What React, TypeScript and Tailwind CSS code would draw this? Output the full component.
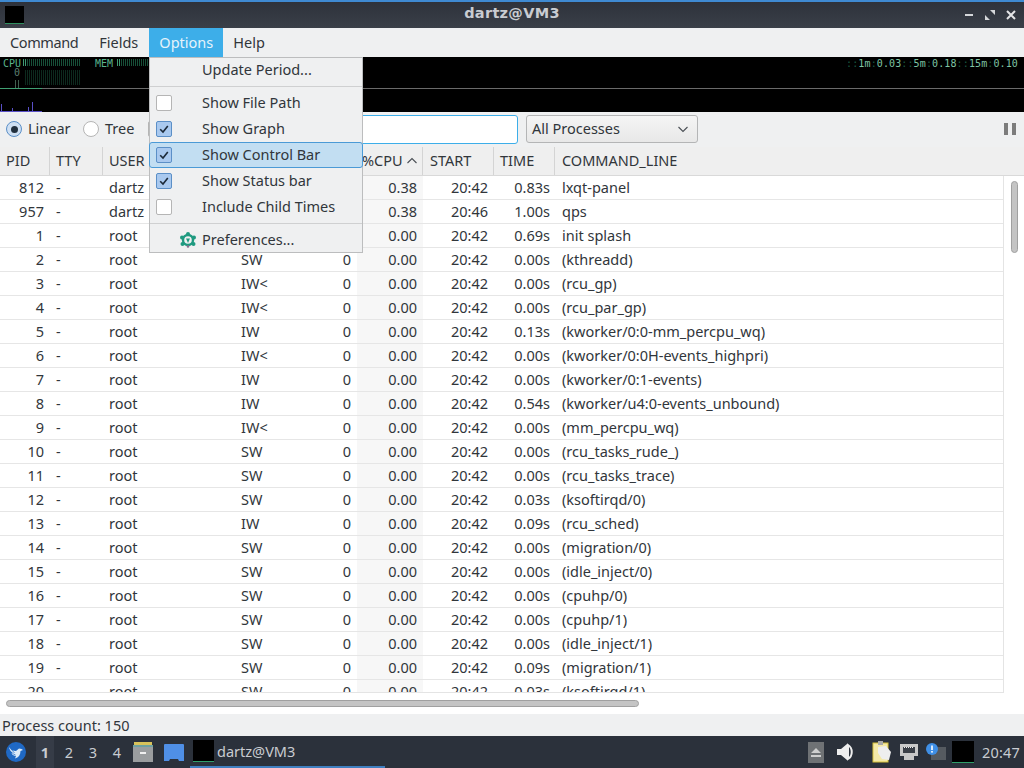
import React from 'react';

const rows = [
  { pid: '812', user: 'dartz', stat: '', rss: '', cpu: '0.38', start: '20:42', time: '0.83s', cmd: 'lxqt-panel' },
  { pid: '957', user: 'dartz', stat: '', rss: '', cpu: '0.38', start: '20:46', time: '1.00s', cmd: 'qps' },
  { pid: '1', user: 'root', stat: '', rss: '', cpu: '0.00', start: '20:42', time: '0.69s', cmd: 'init splash' },
  { pid: '2', user: 'root', stat: 'SW', rss: '0', cpu: '0.00', start: '20:42', time: '0.00s', cmd: '(kthreadd)' },
  { pid: '3', user: 'root', stat: 'IW<', rss: '0', cpu: '0.00', start: '20:42', time: '0.00s', cmd: '(rcu_gp)' },
  { pid: '4', user: 'root', stat: 'IW<', rss: '0', cpu: '0.00', start: '20:42', time: '0.00s', cmd: '(rcu_par_gp)' },
  { pid: '5', user: 'root', stat: 'IW', rss: '0', cpu: '0.00', start: '20:42', time: '0.13s', cmd: '(kworker/0:0-mm_percpu_wq)' },
  { pid: '6', user: 'root', stat: 'IW<', rss: '0', cpu: '0.00', start: '20:42', time: '0.00s', cmd: '(kworker/0:0H-events_highpri)' },
  { pid: '7', user: 'root', stat: 'IW', rss: '0', cpu: '0.00', start: '20:42', time: '0.00s', cmd: '(kworker/0:1-events)' },
  { pid: '8', user: 'root', stat: 'IW', rss: '0', cpu: '0.00', start: '20:42', time: '0.54s', cmd: '(kworker/u4:0-events_unbound)' },
  { pid: '9', user: 'root', stat: 'IW<', rss: '0', cpu: '0.00', start: '20:42', time: '0.00s', cmd: '(mm_percpu_wq)' },
  { pid: '10', user: 'root', stat: 'SW', rss: '0', cpu: '0.00', start: '20:42', time: '0.00s', cmd: '(rcu_tasks_rude_)' },
  { pid: '11', user: 'root', stat: 'SW', rss: '0', cpu: '0.00', start: '20:42', time: '0.00s', cmd: '(rcu_tasks_trace)' },
  { pid: '12', user: 'root', stat: 'SW', rss: '0', cpu: '0.00', start: '20:42', time: '0.03s', cmd: '(ksoftirqd/0)' },
  { pid: '13', user: 'root', stat: 'IW', rss: '0', cpu: '0.00', start: '20:42', time: '0.09s', cmd: '(rcu_sched)' },
  { pid: '14', user: 'root', stat: 'SW', rss: '0', cpu: '0.00', start: '20:42', time: '0.00s', cmd: '(migration/0)' },
  { pid: '15', user: 'root', stat: 'SW', rss: '0', cpu: '0.00', start: '20:42', time: '0.00s', cmd: '(idle_inject/0)' },
  { pid: '16', user: 'root', stat: 'SW', rss: '0', cpu: '0.00', start: '20:42', time: '0.00s', cmd: '(cpuhp/0)' },
  { pid: '17', user: 'root', stat: 'SW', rss: '0', cpu: '0.00', start: '20:42', time: '0.00s', cmd: '(cpuhp/1)' },
  { pid: '18', user: 'root', stat: 'SW', rss: '0', cpu: '0.00', start: '20:42', time: '0.00s', cmd: '(idle_inject/1)' },
  { pid: '19', user: 'root', stat: 'SW', rss: '0', cpu: '0.00', start: '20:42', time: '0.09s', cmd: '(migration/1)' },
  { pid: '20', user: 'root', stat: 'SW', rss: '0', cpu: '0.00', start: '20:42', time: '0.03s', cmd: '(ksoftirqd/1)' },
];

function Check({ on }: { on: boolean }) {
  return (
    <span
      className={`flex h-4 w-4 items-center justify-center rounded-[2px] border ${
        on ? 'border-[#5b8fc7] bg-[#a9c9ef]' : 'border-[#b5b5b5] bg-white'
      }`}
    >
      {on && (
        <svg width="12" height="12" viewBox="0 0 12 12" fill="none">
          <path d="M2.2 6.2 5 9l4.8-6" stroke="#1c2a3a" strokeWidth="1.6" />
        </svg>
      )}
    </span>
  );
}

function MenuItem({ label, on, active }: { label: string; on: boolean; active?: boolean }) {
  return (
    <div
      className={`flex h-[26px] items-center pl-[6px] ${
        active ? 'mx-[-1px] rounded-[3px] border border-[#4b9ad6] bg-[#c2def2]' : ''
      }`}
    >
      <Check on={on} />
      <span className="ml-[30px]">{label}</span>
    </div>
  );
}

function Header({ label, className }: { label?: string; className: string }) {
  return (
    <div className={`flex h-full shrink-0 items-center border-r border-[#d4d4d4] ${className}`}>{label}</div>
  );
}

export default function App() {
  return (
    <div className="relative flex h-[768px] w-[1024px] flex-col overflow-hidden bg-white text-[14.5px] text-[#31363b] [font-family:'Noto_Sans',sans-serif]">
      {/* title bar */}
      <div className="relative flex h-[28px] shrink-0 items-center justify-center border-t-2 border-[#3f8ad2] bg-gradient-to-b from-[#2e323b] to-[#3a3f48]">
        <div className="absolute left-[5px] top-[4px] h-[18px] w-[19px] border-b border-[#2f8f5f] bg-black" />
        <span className="mt-[-3px] text-[14.5px] font-bold tracking-[0.3px] text-[#c9ccd1] [font-family:'DejaVu_Sans',sans-serif]">dartz@VM3</span>
        <div className="absolute right-[8px] top-[3px] flex items-center gap-[11px]">
          <svg width="10" height="20" viewBox="0 0 10 20">
            <rect x="1" y="9" width="8" height="2" fill="#d5d7da" />
          </svg>
          <svg width="10" height="20" viewBox="0 0 10 20">
            <path d="M5 5h5v5zM0 10l5 5H0z" fill="#d5d7da" />
          </svg>
          <svg width="10" height="20" viewBox="0 0 10 20">
            <path d="M1 6l8 8M9 6l-8 8" stroke="#e4e5e7" strokeWidth="2" />
          </svg>
        </div>
      </div>

      {/* menu bar */}
      <div className="flex h-[29px] shrink-0 items-center bg-[#eff0f1]">
        <span className="px-[10px] tracking-[-0.4px]">Command</span>
        <span className="ml-px pl-[10px] pr-[11px]">Fields</span>
        <span className="flex h-full items-center bg-[#3daee9] px-[10px] text-[#e6f3fb]">Options</span>
        <span className="px-[10px]">Help</span>
      </div>

      {/* graph */}
      <div className="relative h-[55px] shrink-0 bg-black text-[10px] leading-none text-[#5ab48c] [font-family:'DejaVu_Sans_Mono',monospace]">
        <div className="h-[32px] border-b border-[#6a6a6a]">
          <div className="flex h-[31px] items-start pl-[3px] pt-[2px]">
            <span className="w-[19px]">CPU</span>
            <svg width="60" height="26" className="shrink-0" shapeRendering="crispEdges">
              <path d="M1 0v7M3 0v7" stroke="#3f9a72" />
              <path d="M5 0v7M7 0v7M9 0v7M11 0v7M13 0v7M15 0v7M17 0v7M19 0v7M21 0v7M23 0v7M25 0v7M27 0v7M29 0v7M31 0v7M33 0v7M35 0v7M37 0v7M39 0v7M41 0v7M43 0v7M45 0v7M47 0v7M49 0v7M51 0v7M53 0v7M55 0v7M57 0v7" stroke="#174f38" />
              <path d="M3 11v15M5 11v15M7 11v15M9 11v15M11 11v15M13 11v15M15 11v15M17 11v15M19 11v15M21 11v15M23 11v15M25 11v15M27 11v15M29 11v15M31 11v15M33 11v15M35 11v15M37 11v15M39 11v15M41 11v15M43 11v15M45 11v15M47 11v15M49 11v15M51 11v15M53 11v15M55 11v15M57 11v15" stroke="#0d2a1e" />
            </svg>
            <span className="ml-[13px] w-[21px]">MEM</span>
            <svg width="34" height="8" className="shrink-0" shapeRendering="crispEdges">
              <path d="M1 0v7M3 0v7" stroke="#3f9a72" />
              <path d="M5 0v7M7 0v7M9 0v7M11 0v7M13 0v7M15 0v7M17 0v7M19 0v7M21 0v7M23 0v7M25 0v7M27 0v7M29 0v7M31 0v7" stroke="#174f38" />
            </svg>
            <span className="ml-auto mr-[6px] tracking-[0.12px] text-[#7fc4a4]">
              <span className="text-[#1a5a40]">::</span>1m<span className="text-[#1a5a40]">:</span>0.03<span className="text-[#1a5a40]">::</span>5m<span className="text-[#1a5a40]">:</span>0.18<span className="text-[#1a5a40]">::</span>15m<span className="text-[#1a5a40]">:</span>0.10
            </span>
          </div>
          <span className="absolute left-[14px] top-[11px] text-[#5d7f70]">0</span>
          <span className="absolute left-[15px] top-[23px] h-[8px] w-[4px] border-x border-[#40604f]" />
          <span className="absolute left-0 top-[31px] h-px w-[42px] bg-[#3f9f72]" />
        </div>
        <svg width="42" height="22" className="absolute left-0 top-[33px]" shapeRendering="crispEdges">
          <path d="M1 14v7M12 18v3M28 17v4M32 12v9" stroke="#5a50c8" />
          <path d="M0 21.5h42" stroke="#5a50c8" />
        </svg>
      </div>

      {/* control bar */}
      <div className="flex h-[35px] shrink-0 items-center bg-[#eff0f1] pb-px">
        <span className="ml-[6px] flex h-4 w-4 items-center justify-center rounded-full border border-[#5b8fc7] bg-[#cfe0f3]">
          <span className="h-[7px] w-[7px] rounded-full bg-[#22303e]" />
        </span>
        <span className="ml-[6px] w-[41px]">Linear</span>
        <span className="ml-[14px] h-4 w-4 rounded-full border border-[#b5b5b5] bg-white" />
        <span className="ml-[6px] w-[30px]">Tree</span>
        <span className="ml-[13px] h-4 w-4 shrink-0 rounded-[2px] border border-[#b5b5b5] bg-white" />
        <div className="ml-[4px] h-[29px] w-[350px] rounded-[3px] border border-[#3daee9] bg-white" />
        <div className="ml-[8px] flex h-[28px] w-[172px] items-center justify-between rounded-[3px] border border-[#b4b5b6] bg-gradient-to-b from-[#f5f5f5] to-[#e8e8e8] pl-[5px] pr-[8px]">
          <span>All Processes</span>
          <svg width="12" height="12" viewBox="0 0 12 12" fill="none">
            <path d="M1.5 4 6 8.5 10.5 4" stroke="#4a4f55" strokeWidth="1.1" />
          </svg>
        </div>
        <div className="ml-auto mr-[8px] flex gap-[4px]">
          <span className="h-[12px] w-[4px] bg-[#7c7c7c]" />
          <span className="h-[12px] w-[4px] bg-[#7c7c7c]" />
        </div>
      </div>

      {/* table header */}
      <div className="flex h-[29px] shrink-0 items-center border-b border-[#d9d9d9] bg-[#efefef]">
        <Header label="PID" className="w-[50px] pl-[6px]" />
        <Header label="TTY" className="w-[53px] pl-[6px]" />
        <Header label="USER" className="w-[130px] pl-[6px]" />
        <Header className="w-[57px]" />
        <Header className="w-[67px]" />
        <div className="flex h-full w-[66px] shrink-0 items-center border-r border-[#d4d4d4] pl-[5px]">
          %CPU
          <svg width="12" height="12" viewBox="0 0 12 12" fill="none" className="ml-[3px]">
            <path d="M1.5 8 6 3.5 10.5 8" stroke="#4a4f55" strokeWidth="1.1" />
          </svg>
        </div>
        <Header label="START" className="w-[71px] pl-[7px]" />
        <Header label="TIME" className="w-[61px] pl-[6px]" />
        <div className="flex h-full flex-1 items-center pl-[7px]">COMMAND_LINE</div>
      </div>

      {/* table */}
      <div className="relative flex min-h-0 flex-1 flex-col bg-white">
        <div className="flex min-h-0 flex-1">
          <div className="h-[517px] w-[1004px] shrink-0 overflow-hidden border-r border-b border-[#e4e4e4]">
            {rows.map((r) => (
              <div key={r.pid} className="flex h-[24px] items-center border-b border-[#e6e6e6]">
                <div className="w-[50px] shrink-0 pr-[6px] text-right">{r.pid}</div>
                <div className="w-[53px] shrink-0 pl-[6px]">-</div>
                <div className="w-[130px] shrink-0 pl-[6px]">{r.user}</div>
                <div className="w-[57px] shrink-0 pl-[8px]">{r.stat}</div>
                <div className="w-[67px] shrink-0 pr-[6px] text-right">{r.rss}</div>
                <div className="flex h-full w-[66px] shrink-0 items-center justify-end bg-[#f7f7f7] pr-[6px]">{r.cpu}</div>
                <div className="w-[71px] shrink-0 pr-[6px] text-right">{r.start}</div>
                <div className="w-[61px] shrink-0 pr-[5px] text-right">{r.time}</div>
                <div className="flex-1 whitespace-nowrap pl-[7px]">{r.cmd}</div>
              </div>
            ))}
          </div>
          <div className="flex-1 pl-[7px] pt-[5px]">
            <div className="h-[72px] w-[7px] rounded-full border border-[#a0a0a0] bg-[#c4c4c4]" />
          </div>
        </div>
        <div className="flex h-[21px] shrink-0 items-center pl-[6px]">
          <div className="h-[7px] w-[633px] rounded-full border border-[#a0a0a0] bg-[#c4c4c4]" />
        </div>
      </div>

      {/* status bar */}
      <div className="flex h-[22px] shrink-0 items-center bg-[#eff0f1] pl-[2px] pt-px">Process count: 150</div>

      {/* panel */}
      <div className="flex h-[32px] shrink-0 items-center bg-[#2b313b] text-[#c9ccd1]">
        <svg width="20" height="20" viewBox="0 0 20 20" className="ml-[6px] shrink-0">
          <circle cx="10" cy="10" r="10" fill="#1f69c5" />
          <path d="M3 5c2 3 4 4 7 4l3-2.500 2.500.5 1.500 1-2.500 1c0 4-2 6.500-5.500 7.500l1-2.500c-2 0-3.500-1-4.500-2.500l1.500-.5C4.500 9.500 3.500 7.500 3 5z" fill="#dcebf9" />
          <path d="M5 7l3.500 4M6.500 11.500l3 1.500" stroke="#1f69c5" strokeWidth=".7" />
        </svg>
        <span className="ml-[10px] flex h-[32px] w-[18px] items-center justify-center bg-[#363c47] pt-px font-bold">1</span>
        <span className="ml-[6px] w-[18px] pt-px text-center">2</span>
        <span className="ml-[6px] w-[18px] pt-px text-center">3</span>
        <span className="ml-[6px] w-[18px] pt-px text-center">4</span>
        <svg width="22" height="22" viewBox="0 0 22 22" className="ml-[6px] shrink-0">
          <rect x="2" y="1" width="18" height="4" fill="#d8c25a" />
          <rect x="1" y="4" width="20" height="3" fill="#6ea0a0" />
          <rect x="1" y="6" width="20" height="15" fill="#9a9d9f" />
          <rect x="8" y="11" width="6" height="2" fill="#f0f0f0" />
        </svg>
        <svg width="22" height="22" viewBox="0 0 22 22" className="ml-[9px] shrink-0">
          <path d="M2 3h18a1 1 0 0 1 1 1v16h-5l-1-2H7l-1 2H1V4a1 1 0 0 1 1-1z" fill="#4f8fe6" />
        </svg>
        <div className="ml-[5px] flex h-[32px] w-[195px] shrink-0 items-center border-b-2 border-[#3f7fc0] pl-[3px]">
          <span className="h-[22px] w-[21px] border-b border-[#2f9f6a] bg-black" />
          <span className="ml-[3px] pt-px">dartz@VM3</span>
        </div>
        <div className="ml-auto flex h-full items-center">
          <svg width="16" height="21" viewBox="0 0 16 21">
            <rect width="16" height="21" fill="#6f7275" />
            <path d="M8 6l5 5H3zM3 13h10v2H3z" fill="#cfcfcf" />
          </svg>
          <svg width="18" height="18" viewBox="0 0 18 18" className="ml-[12px]">
            <path d="M1 6h4l6-5v16l-6-5H1z" fill="#eeeeee" />
            <path d="M12 2c5 3 5 11 0 14z" fill="none" stroke="#eeeeee" strokeWidth="2" />
          </svg>
          <svg width="20" height="22" viewBox="0 0 20 22" className="ml-[18px]">
            <rect x="1" y="2" width="15" height="19" fill="#f4e9a8" stroke="#d8c23a" />
            <path d="M6 6l8-1 5 6-2 8-7-1-4-6z" fill="#eeeeee" />
            <rect x="6" y="0" width="5" height="4" fill="#aaaaaa" />
          </svg>
          <svg width="20" height="18" viewBox="0 0 20 18" className="ml-[7px]">
            <path d="M1 1h18v12h-4v4H5v-4H1z" fill="#c8c8c8" />
            <rect x="4" y="4" width="12" height="6" fill="#3a3f47" />
            <path d="M5 4.500h10" stroke="#eeeeee" strokeDasharray="1 1" />
          </svg>
          <svg width="20" height="18" viewBox="0 0 20 18" className="ml-[7px]">
            <rect x="5" y="4" width="15" height="13" fill="#555a60" />
            <circle cx="6" cy="6" r="6" fill="#3f8fe6" />
            <rect x="5.200" y="2.500" width="1.600" height="4.500" fill="#ffffff" />
            <rect x="5.200" y="8" width="1.600" height="1.600" fill="#ffffff" />
          </svg>
          <span className="ml-[6px] h-[22px] w-[22px] border-b border-[#2f9f6a] bg-black" />
          <span className="ml-[8px] mr-[4px] pt-px tracking-[0.2px]">20:47</span>
        </div>
      </div>

      {/* options menu */}
      <div className="absolute left-[149px] top-[57px] w-[214px] border border-[#bcbdbe] bg-[#eff0f1]">
        <div className="flex h-[24px] items-center pl-[52px]">Update Period...</div>
        <div className="mb-[3px] mt-[4px] h-px bg-[#cfd0d1]" />
        <MenuItem label="Show File Path" on={false} />
        <MenuItem label="Show Graph" on />
        <MenuItem label="Show Control Bar" on active />
        <MenuItem label="Show Status bar" on />
        <MenuItem label="Include Child Times" on={false} />
        <div className="mb-[2px] mt-[3px] h-px bg-[#cfd0d1]" />
        <div className="flex h-[26px] items-center pl-[30px] pt-[2px]">
          <svg width="16" height="16" viewBox="0 0 16 16" className="shrink-0">
            <circle cx="8" cy="2" r="2" fill="#1f9a80" />
            <circle cx="2" cy="5.500" r="2" fill="#1f9a80" />
            <circle cx="14" cy="5.500" r="2" fill="#1f9a80" />
            <circle cx="2.500" cy="12" r="2" fill="#1f9a80" />
            <circle cx="13.500" cy="12" r="2" fill="#1f9a80" />
            <circle cx="8" cy="8" r="5" fill="#eff0f1" stroke="#1f9a80" strokeWidth="2.400" />
            <path d="M6 6.500h4L8 11z" fill="#1f9a80" />
            <circle cx="8" cy="14.500" r="1.300" fill="#8a6f8f" />
          </svg>
          <span className="ml-[6px]">Preferences...</span>
        </div>
      </div>
    </div>
  );
}
